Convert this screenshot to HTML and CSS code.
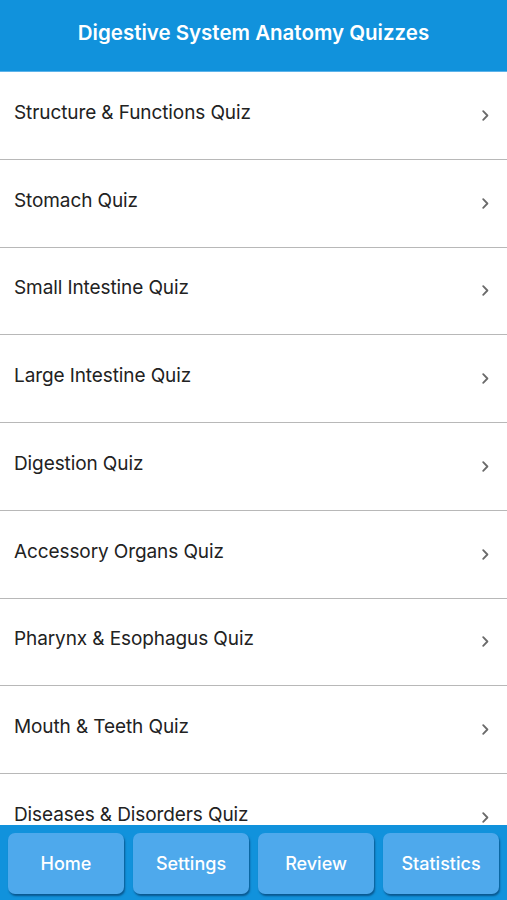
FILE: index.html
```html
<!DOCTYPE html>
<html>
<head>
<meta charset="utf-8">
<link rel="stylesheet" href="styles.css">
</head>
<body>
<div class="app">
  <header class="header">Digestive System Anatomy Quizzes</header>
  <ul class="list">
    <li class="row"><span class="label">Structure &amp; Functions Quiz</span><svg class="chev" viewBox="0 0 7 11"><path d="M1.2 1.2 L5.4 5.5 L1.2 9.8"/></svg></li>
    <li class="row"><span class="label">Stomach Quiz</span><svg class="chev" viewBox="0 0 7 11"><path d="M1.2 1.2 L5.4 5.5 L1.2 9.8"/></svg></li>
    <li class="row"><span class="label">Small Intestine Quiz</span><svg class="chev" viewBox="0 0 7 11"><path d="M1.2 1.2 L5.4 5.5 L1.2 9.8"/></svg></li>
    <li class="row"><span class="label">Large Intestine Quiz</span><svg class="chev" viewBox="0 0 7 11"><path d="M1.2 1.2 L5.4 5.5 L1.2 9.8"/></svg></li>
    <li class="row"><span class="label">Digestion Quiz</span><svg class="chev" viewBox="0 0 7 11"><path d="M1.2 1.2 L5.4 5.5 L1.2 9.8"/></svg></li>
    <li class="row"><span class="label">Accessory Organs Quiz</span><svg class="chev" viewBox="0 0 7 11"><path d="M1.2 1.2 L5.4 5.5 L1.2 9.8"/></svg></li>
    <li class="row"><span class="label">Pharynx &amp; Esophagus Quiz</span><svg class="chev" viewBox="0 0 7 11"><path d="M1.2 1.2 L5.4 5.5 L1.2 9.8"/></svg></li>
    <li class="row"><span class="label">Mouth &amp; Teeth Quiz</span><svg class="chev" viewBox="0 0 7 11"><path d="M1.2 1.2 L5.4 5.5 L1.2 9.8"/></svg></li>
    <li class="row"><span class="label">Diseases &amp; Disorders Quiz</span><svg class="chev" viewBox="0 0 7 11"><path d="M1.2 1.2 L5.4 5.5 L1.2 9.8"/></svg></li>
  </ul>
  <nav class="tabbar">
    <button class="tab">Home</button>
    <button class="tab">Settings</button>
    <button class="tab">Review</button>
    <button class="tab">Statistics</button>
  </nav>
</div>
</body>
</html>
```
FILE: styles.css
```css
* { box-sizing: border-box; }
html, body { margin: 0; padding: 0; }
body {
  font-family: Inter, "Noto Sans", "Liberation Sans", sans-serif;
  background: #fff;
  width: 507px;
  height: 900px;
  overflow: hidden;
}
.app {
  display: flex;
  flex-direction: column;
  height: 900px;
}
.header {
  flex: none;
  height: 72px;
  background: #1192dc;
  border-bottom: 1px solid #5cb3ea;
  color: #fff;
  font-weight: 600;
  font-size: 20.5px;
  display: flex;
  align-items: center;
  justify-content: center;
  padding-bottom: 6px;
}
.list {
  flex: 1;
  list-style: none;
  margin: 0;
  padding: 0;
  overflow: hidden;
}
.row {
  height: 87.75px;
  border-bottom: 1px solid #b8b8b8;
  display: flex;
  align-items: center;
  justify-content: space-between;
  padding: 0 18px 0 14px;
}
.label {
  font-size: 19px;
  color: #222;
  padding-bottom: 6px;
  letter-spacing: -0.1px;
}
.chev {
  width: 7px;
  height: 11px;
  fill: none;
  stroke: #6a6a6a;
  stroke-width: 1.8;
  stroke-linecap: round;
  stroke-linejoin: round;
}
.tabbar {
  flex: none;
  height: 75px;
  background: #1192dc;
  display: flex;
  gap: 9px;
  padding: 8px 8px 6px 8px;
}
.tab {
  flex: 1;
  border: none;
  border-radius: 7px;
  background: #4ea9ec;
  color: #fff;
  font-family: inherit;
  font-size: 18px;
  font-weight: 500;
  box-shadow: 1px 2px 2px rgba(0, 40, 80, 0.55);
  padding: 0;
}
```
